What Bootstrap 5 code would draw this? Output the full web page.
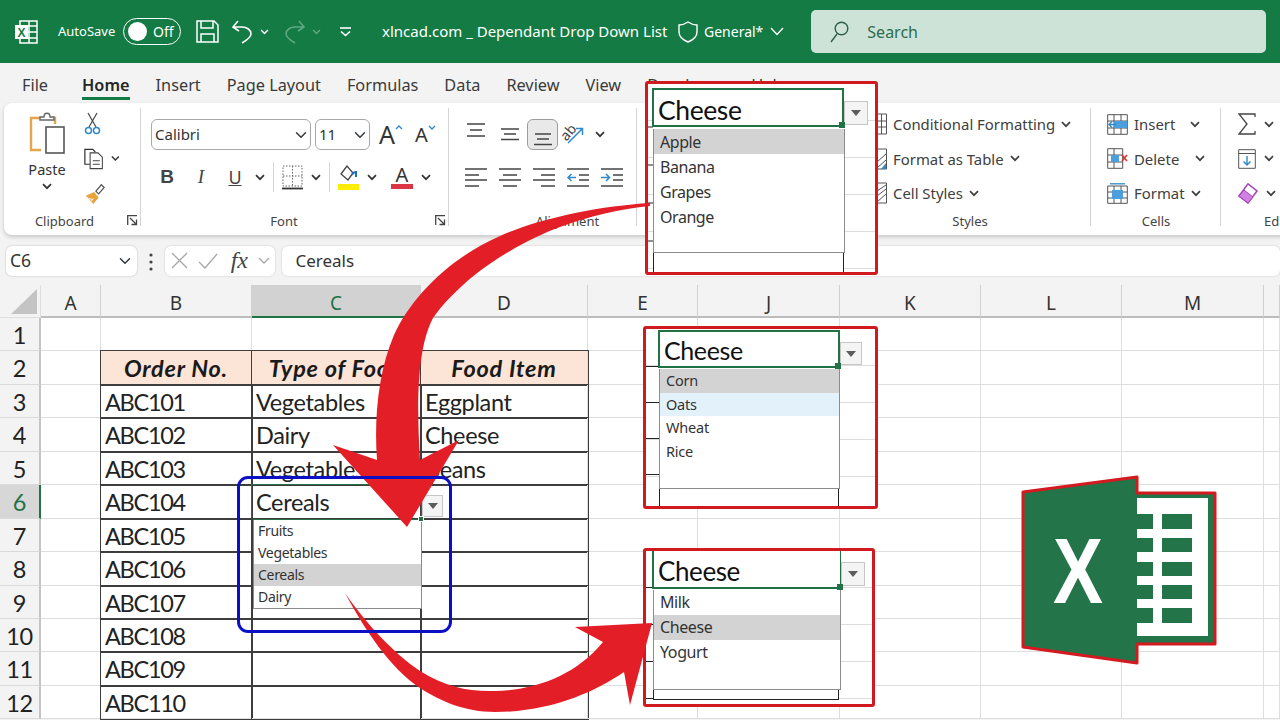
<!DOCTYPE html>
<html lang="en">
<head>
    <meta charset="UTF-8">
    <title>xlncad.com _ Dependant Drop Down List</title>
    <link href="https://cdn.jsdelivr.net/npm/bootstrap@5.3.0/dist/css/bootstrap.min.css" rel="stylesheet">
    <style>
        body { margin: 0; background: #f3f3f3; font-family: "Noto Sans", "Open Sans", sans-serif; color: #333; }
        .xl-app { position: relative; width: 1280px; height: 720px; overflow: hidden; background: #f3f3f3; }

        /* title bar */
        .xl-title { height: 63px; background: #137b43; color: #fff; padding-left: 15px; font-size: 14px; white-space: nowrap; }
        .xl-title svg { display: block; flex: none; }
        .xl-auto { margin-left: 20px; font-size: 13px; width: 60px; }
        .xl-toggle { margin-left: 5px; width: 58px; height: 27px; border: 1.5px solid #fff; border-radius: 14px; padding: 0 3px 0 4px; font-size: 14px; gap: 6px; }
        .xl-knob { width: 19px; height: 19px; border-radius: 50%; background: #fff; }
        .xl-save { margin-left: 15px; }
        .xl-undo { margin-left: 12px; }
        .xl-chev1 { margin-left: 7px; color: #fff; }
        .xl-redo { margin-left: 15px; }
        .xl-chev2 { margin-left: 6px; color: #5fa883; }
        .xl-qat { margin-left: 19px; }
        .xl-doc { margin-left: 31px; width: 287px; font-size: 15px; }
        .xl-shield { margin-left: 9px; }
        .xl-label { margin-left: 6px; }
        .xl-down { margin-left: 7px; }
        .xl-search { margin-left: 27px; width: 455px; height: 43px; background: #cde3d7; border-radius: 5px; color: #2f6b4c; padding-left: 19px; font-size: 16px; gap: 18px; }

        /* tabs */
        .xl-tabs { height: 40px; padding: 4px 0 0 22px; gap: 26px; font-size: 16.3px; color: #3a3a3a; white-space: nowrap; }
        .xl-tabs span { position: relative; line-height: 28px; }
        .xl-tabs .xl-on { font-weight: 600; margin-left: 8px; color: #262626; }
        .xl-tabs .xl-on::after { content: ""; position: absolute; left: 0; right: 0; bottom: -1px; height: 3px; background: #137b43; }

        /* ribbon */
        .xl-ribbon { height: 132px; margin-left: 4px; width: 1300px; background: #fff; border-radius: 8px 0 0 8px; box-shadow: 0 2px 4px rgba(0,0,0,.18); }
        .rb-group { position: relative; height: 100%; flex: none; }
        .rb-group::after { content: ""; position: absolute; right: 0; top: 5px; bottom: 9px; width: 1px; background: #d4d4d4; }
        .rb-label { position: absolute; left: 0; right: 0; top: 109px; text-align: center; font-size: 13px; line-height: 18px; color: #444; }
        .rb-launch { position: absolute; right: 3px; top: 112px; }
        .rb-clip { width: 137px; }
        .rb-font { width: 308px; padding: 16px 0 0 10px; }
        .rb-font .rb-label { right: 22px; }
        .rb-align { width: 188px; padding: 16px 0 0 10px; }
        .rb-align .rb-label { left: 49px; }
        .rb-number { width: 238px; }
        .rb-styles { width: 216px; padding: 4px 0 0 1px; }
        .rb-styles .rb-label { right: 26px; }
        .rb-cells { width: 130px; padding: 4px 0 0 16px; }
        .rb-edit { width: 100px; padding: 4px 0 0 17px; }
        .rb-edit .rb-label { left: 43px; text-align: left; }
        .rb-row { height: 34.5px; gap: 6px; font-size: 14.9px; color: #404040; white-space: nowrap; }
        .rb-paste { width: 80px; padding: 9px 0 0 6px; font-size: 14.5px; line-height: 20px; text-align: center; }
        .rb-paste-name { margin-top: 5px; }
        .rb-paste-chev { display: block; margin: 4px auto 0; }
        .rb-mini { width: 36px; padding-top: 9px; gap: 11.5px; }
        .rb-combo { height: 31px; border: 1.5px solid #a8a8a8; border-radius: 6px; padding: 0 20px 0 3px; font-size: 15px; color: #333; background-position: right 3px center; background-size: 12px; font-family: inherit; box-shadow: none; flex: none; }
        .rb-fname { width: 160px; }
        .rb-fsize { width: 55px; margin-left: 4px; }
        .rb-grow { margin-left: 9px; width: 28px; flex: none; font-size: 25px; line-height: 31px; }
        .rb-shrink { font-size: 20px; margin-left: 8px; }
        .rb-caret { color: #2f8ac9; margin-top: 6px; }
        .rb-row2 { margin-top: 13px; height: 28px; }
        .rb-slot { width: 34px; height: 31px; flex: none; }
        .rb-slot-on { background: #e9e9e9; border: 1.5px solid #9c9c9c; border-radius: 6px; width: 31px; margin-right: 3px; }
        .rb-slot svg { overflow: visible; }
        .rb-b { font: 700 19px "Liberation Sans", sans-serif; width: 32px; color: #444; text-align: center; }
        .rb-i { font: italic 400 19px "Liberation Serif", serif; width: 36px; color: #444; text-align: center; }
        .rb-u { font: 400 18px "Noto Sans", sans-serif; text-decoration: underline; width: 32px; color: #444; text-align: center; }
        .rb-c1 { margin: 0 8px 0 4px; }
        .rb-c2 { margin: 0 8px 0 8px; }
        .rb-c3 { margin-left: 8px; }
        .rb-sep { width: 1px; height: 30px; background: #d4d4d4; margin-right: 8px; }
        .rb-color { width: 22px; margin-left: 6px; line-height: 19px; font-size: 20px; }
        .rb-color span { height: 5px; }
        .rb-w50 { width: 50px; }
        .rb-w55 { width: 55px; }
        .rb-w51 { width: 51px; }

        /* formula bar */
        .xl-formula { height: 50px; padding: 10px 0 9px 6px; }
        .fx-box { background: #fff; border-radius: 6px; height: 30px; box-shadow: 0 0 2px rgba(0,0,0,.2); }
        .fx-name { width: 131px; padding: 0 25px 0 4px; font-size: 17.5px; border: 0; box-shadow: 0 0 2px rgba(0,0,0,.25); background-position: right 4px center; height: 30px; font-family: inherit; color: #333; }
        .fx-dots { width: 28px; }
        .fx-btns { width: 111px; padding-left: 6px; gap: 10px; }
        .fx-f { font: italic 400 24px "Liberation Serif", serif; color: #444; margin-left: 3px; }
        .fx-input { margin-left: 7px; width: 1000px; padding-left: 13px; font-size: 17px; line-height: 30px; }

        /* sheet */
        .xl-sheet { display: grid; grid-template-columns: 41px 60px 151px 169px 167px 110px 142px 141px 141px 142px 16px; grid-template-rows: 33px repeat(12, 33.45px); background: #fff; font-family: Lato, sans-serif; font-size: 23.5px; letter-spacing: -.35px; color: #222; }
        .gc { border-right: 1px solid #dedede; border-bottom: 1px solid #dedede; padding: 0 4px; line-height: 35px; white-space: nowrap; overflow: hidden; }
        .gc-head { background: #f3f3f3; border-right: 1px solid #d0d0d0; border-bottom: 2px solid #bdbdbd; text-align: center; padding: 0; color: #333; letter-spacing: 0; font-family: "Noto Sans", sans-serif; font-size: 19px; line-height: 36px; }
        .gc-head-on { background: #d2d2d2; border-bottom: 2px solid #217346; color: #217346; }
        .gc-num { background: #f3f3f3; border-right: 2px solid #c4c4c4; border-bottom: 1px solid #dadada; text-align: center; padding: 0; }
        .gc-num-on { background: #d7d7d7; color: #217346; border-right: 2px solid #217346; }
        .gc-tbl { outline: 1.5px solid #3d3d3d; outline-offset: -.5px; }
        .gc-code { letter-spacing: -1.3px; }
        .gc-th { background: #fce4d6; font-weight: 700; font-style: italic; text-align: center; color: #1a1a1a; letter-spacing: .75px; }
        .gc-sel { outline: 1.5px solid #217346; }
        .gc-corner { background: #f3f3f3; padding: 0; position: relative; }
        .gc-corner::after { content: ""; position: absolute; right: 3px; bottom: 3px; border-left: 26px solid transparent; border-bottom: 25px solid #c4c4c4; }

        /* validation drop downs */
        .dd-btn { background: #f4f4f4; border: 1px solid #c6c6c6; flex: none; }
        .dd-btn::before { content: ""; border-left: 5px solid transparent; border-right: 5px solid transparent; border-top: 6px solid #5c5c5c; }
        .dd-item { padding-left: 6px; }
        .dd-item-grey { background: #d3d3d3; }
        .dd-item-blue { background: #e3f1fb; }
        .dd-list { background: #fff; border: 1px solid #8c8c8c; border-top: 0; color: #333; }
        .dd-cereal { position: absolute; left: 253px; top: 520px; width: 169px; height: 89px; font: 14px/22px "Noto Sans", sans-serif; letter-spacing: -.3px; }
        .dd-cereal .dd-item { padding-left: 4px; }
        .dd-btn-cereal { position: absolute; left: 422px; top: 495px; width: 21px; height: 22px; }
        .dd-handle { position: absolute; width: 6px; height: 6px; background: #217346; border: 1px solid #fff; }
        .dd-h-c { left: 418px; top: 516px; }

        .pick-box { position: absolute; border: 3px solid #d01a1f; border-radius: 3px; background: #fff repeating-linear-gradient(#fff 0 36px, #dcdcdc 36px 37px); overflow: hidden; }
        .pick-gutter { position: absolute; left: 0; top: 0; bottom: 0; }
        .pick-cell { position: relative; border: 2px solid #217346; font-family: Lato, sans-serif; color: #111; letter-spacing: -.4px; background: #fff; padding-left: 4px; flex: none; }
        .pick-handle { position: absolute; width: 6px; height: 6px; right: -3px; bottom: -3px; background: #217346; }
        .pick-tail { border-left: 1.5px solid #222; border-right: 1.5px solid #222; background: #fff; flex: 1; position: relative; }
        .pick-one { left: 645px; top: 81px; width: 233px; height: 194px; padding: 4px 0 0 4px; font-size: 16px; letter-spacing: -.45px; }
        .pick-one .pick-gutter { width: 5px; background: repeating-linear-gradient(transparent 0 37px, #222 37px 38px); background-position: 0 5.5px; }
        .pick-one .pick-cell { width: 192px; height: 39px; font-size: 26.5px; line-height: 41px; }
        .pick-one .dd-btn { width: 24px; height: 24px; margin-top: 13px; }
        .pick-one .dd-list { width: 192px; height: 124px; margin-left: 1px; line-height: 25px; margin-top: 2px; }
        .pick-one .dd-item { padding-top: 1px; height: 25px; line-height: 24px; }
        .pick-one .pick-tail { width: 191px; margin-left: 1px; }
        .pick-two { left: 643px; top: 326px; width: 235px; height: 183px; padding: 1px 0 0 12px; font-size: 14.5px; letter-spacing: -.2px; }
        .pick-two .pick-gutter { width: 13px; background: repeating-linear-gradient(transparent 0 35px, #222 35px 36px); background-position: 0 2px; }
        .pick-two .pick-cell { width: 182px; height: 38px; font-size: 25px; line-height: 36px; }
        .pick-two .dd-btn { width: 22px; height: 23px; margin-top: 12px; }
        .pick-two .dd-list { width: 181px; height: 120px; margin-left: 1px; line-height: 23.7px; margin-top: 1px; }
        .pick-two .pick-tail { width: 180px; margin-left: 1px; }
        .pick-three { left: 643px; top: 548px; width: 232px; height: 159px; padding: 0 0 0 6px; font-size: 16px; letter-spacing: -.4px; }
        .pick-three .pick-gutter { width: 7px; background: repeating-linear-gradient(transparent 0 36px, #222 36px 37px); }
        .pick-three .pick-cell { width: 189px; height: 38px; font-size: 26px; line-height: 40px; border-top: 0; border-right-width: 1px; }
        .pick-three .dd-btn { width: 24px; height: 24px; margin-top: 11px; }
        .pick-three .dd-list { width: 188px; height: 100px; margin-left: 1px; line-height: 25px; margin-top: 1px; }
        .pick-three .pick-tail { width: 186px; margin-left: 1px; flex: none; height: 10px; border-bottom: 1.5px solid #222; }
        .pick-blue { position: absolute; left: 237px; top: 476px; width: 215px; height: 157px; border: 3px solid #0b10c4; border-radius: 11px; }
        .xl-art { position: absolute; left: 0; top: 0; }
        .xl-logo-text { font: 700 92px "Liberation Sans", sans-serif; fill: #fff; }
    </style>
</head>
<body>
    <svg width="0" height="0" class="position-absolute">
        <symbol id="i-chev" viewBox="0 0 10 7"><path d="M1 1.2l4 4 4-4" fill="none" stroke="currentColor" stroke-width="1.7"/></symbol>
        <symbol id="i-launch" viewBox="0 0 11 11"><path d="M.7 10V.7H10M3 3l6 6M9.5 4.5V9.5H4.5" fill="none" stroke="#444" stroke-width="1.3"/></symbol>
    </svg>

    <div class="xl-app">
        <div class="xl-title d-flex align-items-center">
            <svg width="23" height="24" viewBox="0 0 23 24"><path d="M5 1h17v22H5z" fill="none" stroke="#fff" stroke-width="1.5"/><path d="M14 1v22M9 6h13M9 12h13M9 18h13" stroke="#fff" stroke-width="1.5"/><rect y="5" width="13" height="14" fill="#fff"/><text x="6.5" y="16.5" text-anchor="middle" font-family="Liberation Sans" font-weight="700" font-size="12" fill="#137b43">X</text></svg>
            <span class="xl-auto">AutoSave</span>
            <div class="xl-toggle d-flex align-items-center"><span class="xl-knob"></span><span>Off</span></div>
            <svg class="xl-save" width="23" height="23" viewBox="0 0 23 23"><path d="M1 1h17l4 4v17H1zM5 1v7h12V1M5 22v-8h13v8" fill="none" stroke="#fff" stroke-width="1.5"/></svg>
            <svg class="xl-undo" width="22" height="24" viewBox="0 0 22 24"><path d="M7 1L2 7l6 4M2 7h9c5 0 9 3 9 7 0 3-4 6-9 9" fill="none" stroke="#fff" stroke-width="1.6"/></svg>
            <svg class="xl-chev1" width="9" height="6"><use href="#i-chev"/></svg>
            <svg class="xl-redo" width="22" height="24" viewBox="0 0 22 24"><path d="M15 1l5 6-6 4M20 7h-9C6 7 2 10 2 14c0 3 4 6 9 9" fill="none" stroke="#5fa883" stroke-width="1.6"/></svg>
            <svg class="xl-chev2" width="9" height="6"><use href="#i-chev"/></svg>
            <svg class="xl-qat" width="11" height="10" viewBox="0 0 11 10"><path d="M0 1h11" stroke="#fff" stroke-width="1.6"/><path d="M1 4.5l4.500 4 4.500-4" fill="none" stroke="#fff" stroke-width="1.6"/></svg>
            <span class="xl-doc">xlncad.com _ Dependant Drop Down List</span>
            <svg class="xl-shield" width="20" height="22" viewBox="0 0 20 22"><path d="M10 1c3 2 6 3 9 3v7c0 5-4 8-9 10-5-2-9-5-9-10V4c3 0 6-1 9-3z" fill="none" stroke="#fff" stroke-width="1.4"/></svg>
            <span class="xl-label">General*</span>
            <svg class="xl-down" width="14" height="9" viewBox="0 0 14 9"><path d="M1 1l6 6.5L13 1" fill="none" stroke="#fff" stroke-width="1.4"/></svg>
            <div class="xl-search d-flex align-items-center">
                <svg width="19" height="22" viewBox="0 0 19 22"><circle cx="11.5" cy="7.5" r="6.3" fill="none" stroke="#2f5f47" stroke-width="1.4"/><path d="M7 13l-6 8" stroke="#2f5f47" stroke-width="1.4"/></svg>
                <span>Search</span>
            </div>
        </div>

        <div class="xl-tabs d-flex align-items-center">
            <span>File</span><span class="xl-on">Home</span><span>Insert</span><span>Page Layout</span><span>Formulas</span><span>Data</span><span>Review</span><span>View</span><span>Developer</span><span>Help</span>
        </div>

        <div class="xl-ribbon d-flex">
            <div class="rb-group rb-clip d-flex">
                <div class="rb-paste">
                    <svg width="37" height="42" viewBox="0 0 37 42" class="d-block mx-auto"><path d="M12 6H2v32h10" fill="none" stroke="#e6a54a" stroke-width="2.4"/><path d="M12 6h14v6" fill="none" stroke="#e6a54a" stroke-width="2.4"/><path d="M11 8V5h4c0-5 6-5 6 0h4v3z" fill="#fff" stroke="#666" stroke-width="1.4"/><rect x="17" y="15" width="18" height="26" fill="#fff" stroke="#555" stroke-width="1.6"/></svg>
                    <div class="rb-paste-name">Paste</div>
                    <svg class="rb-paste-chev" width="10" height="7"><use href="#i-chev"/></svg>
                </div>
                <div class="rb-mini d-flex flex-column">
                    <svg width="18" height="23" viewBox="0 0 18 23"><path d="M4 1l8 14M13 1L5 15" stroke="#444" stroke-width="1.2" fill="none"/><circle cx="4.5" cy="18.5" r="3" fill="none" stroke="#2f8ac9" stroke-width="1.5"/><circle cx="12.5" cy="18.5" r="3" fill="none" stroke="#2f8ac9" stroke-width="1.5"/></svg>
                    <div class="d-flex align-items-center gap-2">
                        <svg width="22" height="24" viewBox="0 0 22 24"><path d="M9 18H1V1h9l3 3" fill="none" stroke="#333" stroke-width="1.4"/><path d="M7 5h9l5 5v13H7zM10 14h8M10 18h8" fill="#fff" stroke="#444" stroke-width="1.2"/></svg>
                        <svg width="10" height="7"><use href="#i-chev"/></svg>
                    </div>
                    <svg width="22" height="22" viewBox="0 0 22 24"><path d="M1 15l9-4 5 6-6 7c-2-3-5-6-8-9z" fill="#e8a33d"/><path d="M12 10l6-7 3 3-6 7z" fill="#fff" stroke="#555" stroke-width="1.3"/><path d="M4 18l4 1M7 21l2-3" stroke="#fff" stroke-width="1"/></svg>
                </div>
                <div class="rb-label pe-3">Clipboard</div>
                <svg class="rb-launch" width="11" height="11"><use href="#i-launch"/></svg>
            </div>

            <div class="rb-group rb-font">
                <div class="d-flex align-items-center">
                    <select class="form-select rb-combo rb-fname"><option>Calibri</option></select>
                    <select class="form-select rb-combo rb-fsize"><option>11</option></select>
                    <div class="rb-grow d-flex"><span>A</span><svg class="rb-caret" width="8" height="5"><path d="M1 4l3-3 3 3" fill="none" stroke="currentColor" stroke-width="1.4"/></svg></div>
                    <div class="rb-grow rb-shrink d-flex"><span>A</span><svg class="rb-caret" width="8" height="5"><path d="M1 1l3 3 3-3" fill="none" stroke="currentColor" stroke-width="1.4"/></svg></div>
                </div>
                <div class="rb-row2 d-flex align-items-center">
                    <div class="rb-b">B</div>
                    <div class="rb-i">I</div>
                    <div class="rb-u">U</div>
                    <svg width="10" height="7" class="rb-c1"><use href="#i-chev"/></svg>
                    <div class="rb-sep"></div>
                    <svg width="21" height="25" viewBox="0 0 21 25"><path d="M1 1h19v20H1zM10.500 1v20M1 11h19" fill="none" stroke="#666" stroke-width="1" stroke-dasharray="1.500 1.500"/><path d="M0 23.500h21" stroke="#333" stroke-width="1.800"/></svg>
                    <svg width="10" height="7" class="rb-c2"><use href="#i-chev"/></svg>
                    <div class="rb-sep"></div>
                    <svg width="21" height="25" viewBox="0 0 21 25"><path d="M3 9l6-8 6 7-5 7z" fill="#fff" stroke="#444" stroke-width="1.300"/><path d="M14 10c1-3 3-3 4-3v5" fill="none" stroke="#1f6fb5" stroke-width="2"/><rect y="19" width="21" height="6" fill="#ffec00"/></svg>
                    <svg width="10" height="7" class="rb-c2"><use href="#i-chev"/></svg>
                    <div class="rb-color d-flex flex-column align-items-center">A<span class="d-block w-100 bg-danger"></span></div>
                    <svg width="10" height="7" class="rb-c3"><use href="#i-chev"/></svg>
                </div>
                <div class="rb-label">Font</div>
                <svg class="rb-launch" width="11" height="11"><use href="#i-launch"/></svg>
            </div>

            <div class="rb-group rb-align">
                <div class="d-flex">
                    <div class="rb-slot d-flex justify-content-center"><svg width="22" height="31" viewBox="0 0 22 31"><path d="M2 5h18M5 11h12M2 17h18" stroke="#444" stroke-width="1.500"/></svg></div>
                    <div class="rb-slot d-flex justify-content-center"><svg width="22" height="31" viewBox="0 0 22 31"><path d="M2 10h18M5 15h12M2 20.500h18" stroke="#444" stroke-width="1.500"/></svg></div>
                    <div class="rb-slot rb-slot-on d-flex justify-content-center"><svg width="22" height="28" viewBox="0 0 22 28"><path d="M3 14h16M5 19h12M2 24.500h18" stroke="#444" stroke-width="1.500"/></svg></div>
                    <div class="rb-slot d-flex"><svg width="25" height="31" viewBox="0 0 25 31"><text x="8" y="14" text-anchor="middle" dominant-baseline="middle" font-family="Noto Sans" font-size="14" fill="#444" transform="rotate(-50 8 14)">ab</text><path d="M7 24L21 10M15 9.500h6.500V16" fill="none" stroke="#2f8ac9" stroke-width="1.500"/></svg></div>
                    <svg width="10" height="7" class="align-self-center"><use href="#i-chev"/></svg>
                </div>
                <div class="d-flex mt-2 pt-1">
                    <div class="rb-slot d-flex align-items-center justify-content-center"><svg width="22" height="19" viewBox="0 0 22 19"><path d="M0 1h22M0 7h14M0 12h22M0 18h14" stroke="#444" stroke-width="1.500"/></svg></div>
                    <div class="rb-slot d-flex align-items-center justify-content-center"><svg width="22" height="19" viewBox="0 0 22 19"><path d="M0 1h22M4 7h14M0 12h22M4 18h14" stroke="#444" stroke-width="1.500"/></svg></div>
                    <div class="rb-slot d-flex align-items-center justify-content-center"><svg width="22" height="19" viewBox="0 0 22 19"><path d="M0 1h22M8 7h14M0 12h22M8 18h14" stroke="#444" stroke-width="1.500"/></svg></div>
                    <div class="rb-slot d-flex align-items-center justify-content-center"><svg width="22" height="19" viewBox="0 0 22 19"><path d="M0 1h22M12 7h10M12 12h10M0 18h22" stroke="#444" stroke-width="1.500"/><path d="M9 9.500H1M4.500 6l-3.500 3.500 3.500 3.500" fill="none" stroke="#2f8ac9" stroke-width="1.500"/></svg></div>
                    <div class="rb-slot d-flex align-items-center justify-content-center"><svg width="22" height="19" viewBox="0 0 22 19"><path d="M0 1h22M12 7h10M12 12h10M0 18h22" stroke="#444" stroke-width="1.500"/><path d="M0 9.500h8M5 6l3.500 3.500L5 13" fill="none" stroke="#2f8ac9" stroke-width="1.500"/></svg></div>
                </div>
                <div class="rb-label">Alignment</div>
            </div>

            <div class="rb-group rb-number"></div>

            <div class="rb-group rb-styles">
                <div class="rb-row d-flex align-items-center"><svg width="11" height="22" viewBox="0 0 11 22"><path d="M.5 1h10v20H.5zM5.500 1v20M.5 8h10M.5 14h10" fill="none" stroke="#555"/></svg><span>Conditional Formatting</span><svg width="10" height="7"><use href="#i-chev"/></svg></div>
                <div class="rb-row d-flex align-items-center"><svg width="11" height="22" viewBox="0 0 11 22"><path d="M.5 1h10v20H.5z" fill="none" stroke="#555"/><path d="M1 14l9-8M1 20l9-8" stroke="#555"/><path d="M5 21l5-6v6z" fill="#2f8ac9"/></svg><span>Format as Table</span><svg width="10" height="7"><use href="#i-chev"/></svg></div>
                <div class="rb-row d-flex align-items-center"><svg width="11" height="22" viewBox="0 0 11 22"><path d="M.5 1h10v20H.5z" fill="none" stroke="#555"/><path d="M1 9l9-6M1 14l9-7M1 20l9-8" stroke="#555"/></svg><span>Cell Styles</span><svg width="10" height="7"><use href="#i-chev"/></svg></div>
                <div class="rb-label">Styles</div>
            </div>

            <div class="rb-group rb-cells">
                <div class="rb-row d-flex align-items-center"><svg width="21" height="21" viewBox="0 0 21 21"><path d="M.7.7h19.600v19.600H.7zM.7 7h19.600M.7 14h19.600M7 .7v19.600M14 .7v19.600" fill="none" stroke="#555"/><rect x="7" y="7" width="13" height="7" fill="#4a9fdc"/><path d="M9 10.500H2M5 7.500l-3 3 3 3" fill="none" stroke="#2f8ac9" stroke-width="1.300"/></svg><span class="rb-w50">Insert</span><svg width="10" height="7"><use href="#i-chev"/></svg></div>
                <div class="rb-row d-flex align-items-center"><svg width="21" height="21" viewBox="0 0 21 21"><path d="M.7.7h15v19.600h-15zM.7 7h15M.7 14h15M7 .7v19.600" fill="none" stroke="#555"/><rect x="4" y="7" width="8" height="7" fill="#4a9fdc"/><path d="M15 7l5 6M20 7l-5 6" stroke="#d9332a" stroke-width="1.600"/></svg><span class="rb-w55">Delete</span><svg width="10" height="7"><use href="#i-chev"/></svg></div>
                <div class="rb-row d-flex align-items-center"><svg width="21" height="21" viewBox="0 0 21 21"><path d="M.7 3h19.600v17.300H.7zM.7 9h19.600M.7 15h19.600M7 3v17.300M14 3v17.300" fill="none" stroke="#555"/><rect x="5" y="7" width="11" height="9" fill="#4a9fdc"/><path d="M3 .8h15" stroke="#2f8ac9" stroke-width="1.300"/></svg><span class="rb-w51">Format</span><svg width="10" height="7"><use href="#i-chev"/></svg></div>
                <div class="rb-label">Cells</div>
            </div>

            <div class="rb-group rb-edit">
                <div class="rb-row d-flex align-items-center gap-2"><svg width="18" height="22" viewBox="0 0 18 22"><path d="M17 4V1H1l8 10-8 10h16v-3" fill="none" stroke="#444" stroke-width="1.300"/></svg><svg width="10" height="7"><use href="#i-chev"/></svg></div>
                <div class="rb-row d-flex align-items-center gap-2"><svg width="18" height="20" viewBox="0 0 18 20"><path d="M.7.7h16.600v18.600H.7zM.7 4.500h16.600" fill="#fff" stroke="#555"/><path d="M9 7v9M5.500 12.500L9 16l3.500-3.500" fill="none" stroke="#2f8ac9" stroke-width="1.400"/></svg><svg width="10" height="7"><use href="#i-chev"/></svg></div>
                <div class="rb-row d-flex align-items-center gap-2"><svg width="20" height="21" viewBox="0 0 20 21"><path d="M10 .8L19 8l-9 12L1 13z" fill="#fff" stroke="#a545b8" stroke-width="1.500"/><path d="M1 13l5-6 9 7-5 6z" fill="#d17fe0" stroke="#a545b8" stroke-width="1"/></svg><svg width="10" height="7"><use href="#i-chev"/></svg></div>
                <div class="rb-label">Editing</div>
            </div>
        </div>

        <div class="xl-formula d-flex align-items-center">
            <select class="form-select fx-name"><option>C6</option></select>
            <div class="fx-dots text-center"><svg width="4" height="18" viewBox="0 0 4 18"><circle cx="2" cy="2" r="1.600" fill="#444"/><circle cx="2" cy="9" r="1.600" fill="#444"/><circle cx="2" cy="16" r="1.600" fill="#444"/></svg></div>
            <div class="fx-box fx-btns d-flex align-items-center">
                <svg width="17" height="17" viewBox="0 0 17 17"><path d="M1 1l15 15M16 1L1 16" stroke="#a6a6a6" stroke-width="1.300"/></svg>
                <svg width="20" height="16" viewBox="0 0 20 16"><path d="M1 9l6 6L19 1" fill="none" stroke="#a6a6a6" stroke-width="1.300"/></svg>
                <span class="fx-f">fx</span>
                <svg width="12" height="8" viewBox="0 0 12 8"><path d="M1 1l5 5 5-5" fill="none" stroke="#a6a6a6" stroke-width="1.300"/></svg>
            </div>
            <div class="fx-box fx-input">Cereals</div>
        </div>

        <div class="xl-sheet" id="sheet"></div>

        <div class="dd-btn dd-btn-cereal d-flex align-items-center justify-content-center"></div>
        <div class="dd-list dd-cereal">
            <div class="dd-item">Fruits</div>
            <div class="dd-item">Vegetables</div>
            <div class="dd-item dd-item-grey">Cereals</div>
            <div class="dd-item">Dairy</div>
        </div>
        <div class="dd-handle dd-h-c"></div>

        <div class="pick-box pick-one">
            <div class="pick-gutter"></div>
            <div class="d-flex flex-column h-100">
                <div class="d-flex">
                    <div class="pick-cell">Cheese<span class="pick-handle"></span></div>
                    <div class="dd-btn d-flex align-items-center justify-content-center"></div>
                </div>
                <div class="dd-list">
                    <div class="dd-item dd-item-grey">Apple</div>
                    <div class="dd-item">Banana</div>
                    <div class="dd-item">Grapes</div>
                    <div class="dd-item">Orange</div>
                </div>
                <div class="pick-tail"></div>
            </div>
        </div>

        <div class="pick-box pick-two">
            <div class="pick-gutter"></div>
            <div class="d-flex flex-column h-100">
                <div class="d-flex">
                    <div class="pick-cell">Cheese<span class="pick-handle"></span></div>
                    <div class="dd-btn d-flex align-items-center justify-content-center"></div>
                </div>
                <div class="dd-list">
                    <div class="dd-item dd-item-grey">Corn</div>
                    <div class="dd-item dd-item-blue">Oats</div>
                    <div class="dd-item">Wheat</div>
                    <div class="dd-item">Rice</div>
                </div>
                <div class="pick-tail"></div>
            </div>
        </div>

        <div class="pick-box pick-three">
            <div class="pick-gutter"></div>
            <div class="d-flex flex-column h-100">
                <div class="d-flex">
                    <div class="pick-cell">Cheese<span class="pick-handle"></span></div>
                    <div class="dd-btn d-flex align-items-center justify-content-center"></div>
                </div>
                <div class="dd-list">
                    <div class="dd-item">Milk</div>
                    <div class="dd-item dd-item-grey">Cheese</div>
                    <div class="dd-item">Yogurt</div>
                </div>
                <div class="pick-tail"></div>
            </div>
        </div>

        <svg class="xl-art" width="1280" height="720" viewBox="0 0 1280 720">
            <path d="M650 203C600 206 540 218 500 236C450 258 412 296 394 335C378 372 374 420 377 460L333 445L407 527L459 440L420 460C417 410 416 350 433 318C443 304 452 295 463 285C490 260 530 238 560 227C590 216 620 209 650 206Z" fill="#e41e26"/>
            <path d="M345 593C365 622 392 652 420 671C445 687 470 692 495 691C535 690 575 676 603 642L575 627L652 623L630 705L624 672C595 692 550 712 495 712C465 712 440 701 420 688C390 668 365 630 345 593Z" fill="#e41e26"/>
            <g>
                <path d="M1023 492L1137 477V493H1215V644H1137V663L1023 647Z" fill="#24744a" stroke="#d41a1f" stroke-width="3" stroke-linejoin="round"/>
                <rect x="1137" y="498" width="71" height="138" fill="#fff"/>
                <path d="M1137 514h16v15h-16zM1162 514h30v15h-30zM1137 538h16v14h-16zM1162 538h30v14h-30zM1137 562h16v14h-16zM1162 562h30v14h-30zM1137 585h16v14h-16zM1162 585h30v14h-30zM1137 608h16v15h-16zM1162 608h30v15h-30z" fill="#24744a"/>
                <text class="xl-logo-text" x="1053" y="603" textLength="50" lengthAdjust="spacingAndGlyphs">X</text>
            </g>
        </svg>

        <div class="pick-blue"></div>
    </div>

    <script>
        const colunas = ['A', 'B', 'C', 'D', 'E', 'J', 'K', 'L', 'M', ''];
        const pedidos = [
            ['ABC101', 'Vegetables', 'Eggplant'],
            ['ABC102', 'Dairy', 'Cheese'],
            ['ABC103', 'Vegetables', 'Beans'],
            ['ABC104', 'Cereals', ''],
            ['ABC105', '', ''],
            ['ABC106', '', ''],
            ['ABC107', '', ''],
            ['ABC108', '', ''],
            ['ABC109', '', ''],
            ['ABC110', '', '']
        ];

        function montarPlanilha() {
            let html = '<div class="gc gc-corner"></div>';
            colunas.forEach(c => {
                html += `<div class="gc gc-head${c === 'C' ? ' gc-head-on' : ''}">${c}</div>`;
            });
            for (let linha = 1; linha <= 12; linha++) {
                html += `<div class="gc gc-num${linha === 6 ? ' gc-num-on' : ''}">${linha}</div>`;
                colunas.forEach((c, i) => {
                    let classe = 'gc';
                    let texto = '';
                    if (i >= 1 && i <= 3 && linha >= 2) {
                        classe += ' gc-tbl';
                        if (linha === 2) {
                            classe += ' gc-th';
                            texto = ['Order No.', 'Type of Food', 'Food Item'][i - 1];
                        } else {
                            texto = pedidos[linha - 3][i - 1];
                            if (i === 1) classe += ' gc-code';
                        }
                        if (linha === 6 && i === 2) classe += ' gc-sel';
                    }
                    html += `<div class="${classe}">${texto}</div>`;
                });
            }
            document.getElementById('sheet').innerHTML = html;
        }

        montarPlanilha();
    </script>
    <script src="https://cdn.jsdelivr.net/npm/bootstrap@5.3.0/dist/js/bootstrap.bundle.min.js"></script>
</body>
</html>
